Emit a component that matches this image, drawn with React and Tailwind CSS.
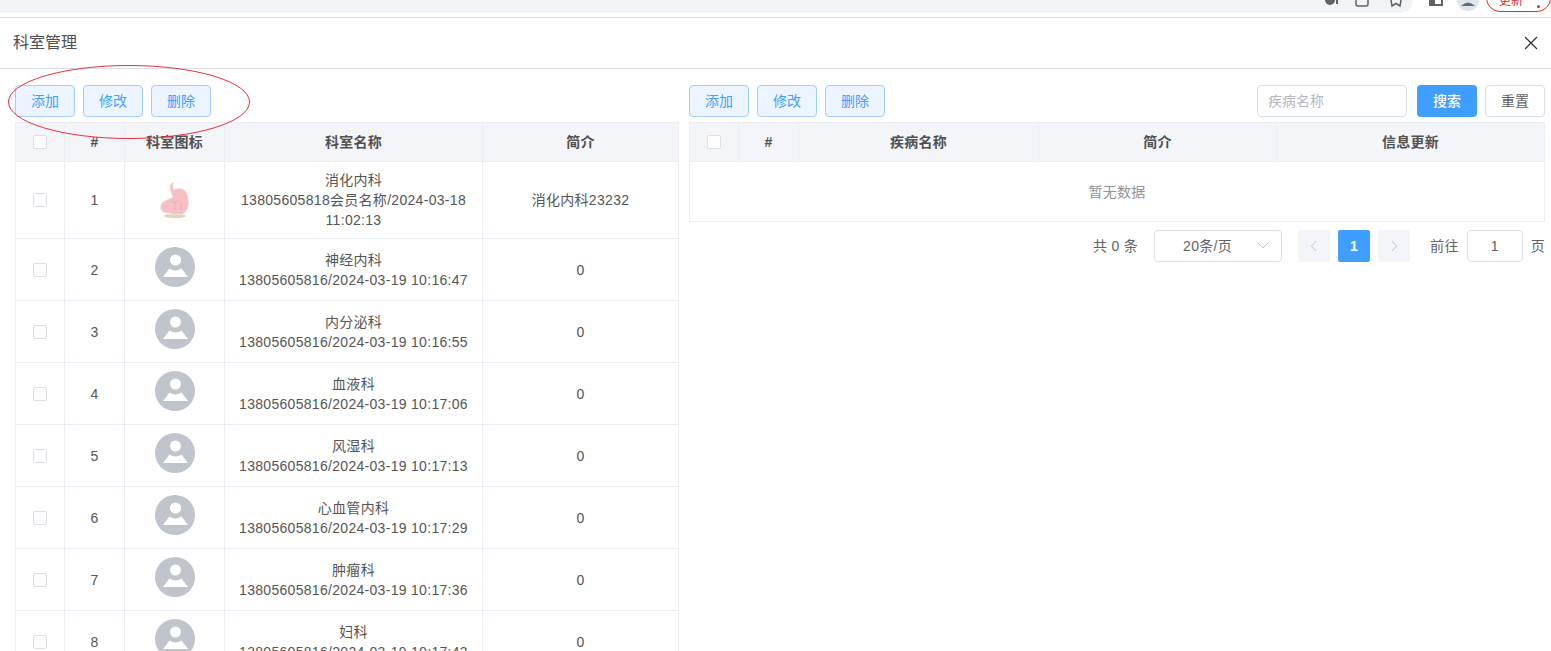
const font = { fontFamily: '"Liberation Sans", "Noto Sans CJK SC", sans-serif' }

const departments = [
  { id: 1, name: '消化内科', info: ['13805605818会员名称/2024-03-18', '11:02:13'], intro: '消化内科23232', stomach: true },
  { id: 2, name: '神经内科', info: ['13805605816/2024-03-19 10:16:47'], intro: '0' },
  { id: 3, name: '内分泌科', info: ['13805605816/2024-03-19 10:16:55'], intro: '0' },
  { id: 4, name: '血液科', info: ['13805605816/2024-03-19 10:17:06'], intro: '0' },
  { id: 5, name: '风湿科', info: ['13805605816/2024-03-19 10:17:13'], intro: '0' },
  { id: 6, name: '心血管内科', info: ['13805605816/2024-03-19 10:17:29'], intro: '0' },
  { id: 7, name: '肿瘤科', info: ['13805605816/2024-03-19 10:17:36'], intro: '0' },
  { id: 8, name: '妇科', info: ['13805605816/2024-03-19 10:17:43'], intro: '0' },
]

function Checkbox() {
  return <span className="block h-[14px] w-[14px] rounded-[2px] border border-[#dcdfe6] bg-white" />
}

function PlainButton({ children }) {
  return (
    <button
      type="button"
      className="h-8 w-[60px] rounded border border-[#a0cfff] bg-[#ecf5ff] text-sm text-[#409eff]"
    >
      {children}
    </button>
  )
}

function ActionButtons() {
  return (
    <div className="flex gap-2">
      <PlainButton>添加</PlainButton>
      <PlainButton>修改</PlainButton>
      <PlainButton>删除</PlainButton>
    </div>
  )
}

function Avatar() {
  return (
    <svg className="mb-[6px]" width="40" height="40" viewBox="0 0 40 40">
      <circle cx="20" cy="20" r="20" fill="#c0c4cc" />
      <circle cx="20.5" cy="13" r="5.5" fill="#fff" />
      <path d="M8 30 L14.5 21.5 Q20.5 25.5 26.5 21.5 L33 30 Z" fill="#fff" />
    </svg>
  )
}

function Stomach() {
  return (
    <svg width="30" height="37" viewBox="0 0 30 37">
      <ellipse cx="15" cy="34" rx="11" ry="2" fill="#dfd5bb" />
      <path
        d="M12.7 0.5 C10.5 1.5 9.5 4 10 6 C10.5 10 12.5 13 12.7 15 C10 17 6 18 3 20 C0.5 22 0 26 1.5 28.5 C4 31 7 31 9 31 C12 32.5 15 33 18 32 C20 33 22.5 33 24 31.5 C27 29 28.5 25 28.5 21 C28.5 17 28 13 25.5 9.5 C23 6.5 19 5.5 14 7.5 C12.5 6 12.5 3 13.5 1 Z"
        fill="#f6c0c4"
        stroke="#f8e4e4"
        strokeWidth="0.8"
      />
      <path d="M11 19 C14 21 17 20 20 17.5 M15 20 L14.5 29 M21 20 L20.5 28" stroke="#eaaab2" strokeWidth="0.8" fill="none" />
    </svg>
  )
}

function Th({ className = '', children }) {
  return (
    <th className={`border-r border-b border-[#ebeef5] bg-[#f4f5f9] p-0 text-sm font-bold tracking-[0.3px] text-[#505050] ${className}`}>
      {children}
    </th>
  )
}

function Td({ className = 'text-[#555555]', colSpan, children }) {
  return (
    <td
      colSpan={colSpan}
      className={`border-r border-b border-[#ebeef5] p-0 text-center align-middle text-sm leading-[20px] tracking-[0.3px] ${className}`}
    >
      {children}
    </td>
  )
}

function CheckHead() {
  return (
    <Th>
      <div className="flex justify-center">
        <Checkbox />
      </div>
    </Th>
  )
}

function DepartmentTable() {
  return (
    <table className="w-[664px] table-fixed border-separate border-spacing-0 border-t border-l border-[#ebeef5]">
      <colgroup>
        <col className="w-[49px]" />
        <col className="w-[60px]" />
        <col className="w-[100px]" />
        <col className="w-[258px]" />
        <col className="w-[196px]" />
      </colgroup>
      <thead>
        <tr className="h-[39px]">
          <CheckHead />
          <Th>#</Th>
          <Th>科室图标</Th>
          <Th>科室名称</Th>
          <Th>简介</Th>
        </tr>
      </thead>
      <tbody>
        {departments.map((d) => (
          <tr key={d.id} className={d.stomach ? 'h-[77px]' : 'h-[62px]'}>
            <Td>
              <div className="flex justify-center">
                <Checkbox />
              </div>
            </Td>
            <Td>{d.id}</Td>
            <Td>
              <div className="flex justify-center">{d.stomach ? <Stomach /> : <Avatar />}</div>
            </Td>
            <Td>
              <div>{d.name}</div>
              {d.info.map((line) => (
                <div key={line}>{line}</div>
              ))}
            </Td>
            <Td>{d.intro}</Td>
          </tr>
        ))}
      </tbody>
    </table>
  )
}

function DiseaseTable() {
  return (
    <table className="w-[856px] table-fixed border-separate border-spacing-0 border-t border-l border-[#ebeef5]">
      <colgroup>
        <col className="w-[49px]" />
        <col className="w-[60px]" />
        <col className="w-[240px]" />
        <col className="w-[238px]" />
        <col className="w-[268px]" />
      </colgroup>
      <thead>
        <tr className="h-[39px]">
          <CheckHead />
          <Th>#</Th>
          <Th>疾病名称</Th>
          <Th>简介</Th>
          <Th>信息更新</Th>
        </tr>
      </thead>
      <tbody>
        <tr className="h-[60px]">
          <Td className="text-[#909399]" colSpan={5}>
            暂无数据
          </Td>
        </tr>
      </tbody>
    </table>
  )
}

function Pagination() {
  return (
    <div className="mt-2 flex h-8 items-center justify-end text-sm tracking-[0.3px] text-[#606266]">
      <span>共 0 条</span>
      <div className="relative ml-4 flex h-8 w-[128px] items-center rounded border border-[#dcdfe6] pl-7">
        20条/页
        <svg className="absolute right-3 top-[11px]" width="12" height="8" viewBox="0 0 12 8" fill="none" stroke="#c0c4cc">
          <path d="M1 1 L6 6 L11 1" />
        </svg>
      </div>
      <div className="ml-4 flex h-8 w-8 items-center justify-center rounded-[2px] bg-[#f4f5f9]">
        <svg width="8" height="12" viewBox="0 0 8 12" fill="none" stroke="#c0c4cc"><path d="M6 1 L1.5 6 L6 11" /></svg>
      </div>
      <div className="ml-2 flex h-8 w-8 items-center justify-center rounded-[2px] bg-[#409eff] font-bold text-white">1</div>
      <div className="ml-2 flex h-8 w-8 items-center justify-center rounded-[2px] bg-[#f4f5f9]">
        <svg width="8" height="12" viewBox="0 0 8 12" fill="none" stroke="#c0c4cc"><path d="M2 1 L6.5 6 L2 11" /></svg>
      </div>
      <span className="ml-5">前往</span>
      <div className="ml-2 flex h-8 w-14 items-center justify-center rounded border border-[#dcdfe6]">1</div>
      <span className="ml-2">页</span>
    </div>
  )
}

function BrowserBar() {
  return (
    <div className="flex h-[18px] items-start overflow-hidden border-b border-[#dadce0]">
      <div className="flex h-[13px] w-[1413px] shrink-0 items-start justify-end gap-[20px] rounded-br-[14px] bg-[#f1f3f4] pr-[10px]">
        <svg className="-mr-[6px]" width="16" height="13" viewBox="0 0 16 13" fill="#5f6368">
          <circle cx="5" cy="0" r="5" />
          <rect x="11" y="0" width="2" height="4" />
        </svg>
        <svg width="14" height="13" viewBox="0 0 14 13" fill="none" stroke="#5f6368" strokeWidth="1.5">
          <path d="M1 0 V4 Q1 6 3 6 H11 Q13 6 13 4 V0" />
        </svg>
        <svg width="14" height="13" viewBox="0 0 14 13" fill="none" stroke="#5f6368" strokeWidth="1.5">
          <path d="M2 0 L3 6 L7 3.5 L11 6 L12 0" />
        </svg>
      </div>
      <svg className="ml-4 shrink-0" width="14" height="7" viewBox="0 0 14 7" fill="#5f6368">
        <path d="M0 0 H14 V6 H0 Z M6 0 V4 H12 V0 Z" fillRule="evenodd" />
      </svg>
      <svg className="ml-[14px] shrink-0" width="22" height="11" viewBox="0 0 22 11">
        <circle cx="11" cy="0" r="11" fill="#dfe3ea" />
        <path d="M4 6 Q11 -1 18 6 Z" fill="#5d6b85" />
      </svg>
      <div className="-mt-4 ml-[7px] flex h-7 w-[65px] shrink-0 items-end justify-between rounded-[14px] border border-[#d93025] pb-[2px] pl-[12px] pr-[10px] text-xs leading-[16px] text-[#d93025]">
        更新
        <span className="mb-[1px] h-[3px] w-[3px] rounded-full bg-[#d93025]" />
      </div>
    </div>
  )
}

export default function App() {
  return (
    <div className="relative h-[651px] w-[1551px] overflow-hidden bg-white" style={font}>
      <BrowserBar />

      <header className="flex h-[51px] items-center justify-between border-b border-[#dcdfe6] px-[13px]">
        <span className="text-base text-[#505050]">科室管理</span>
        <svg width="14" height="14" viewBox="0 0 14 14" stroke="#303133" strokeWidth="1.2">
          <path d="M1 1 L13 13 M13 1 L1 13" />
        </svg>
      </header>

      <main className="flex gap-[10px] pl-[15px] pt-4">
        <section className="w-[664px] shrink-0">
          <div className="mb-[5px]">
            <ActionButtons />
          </div>
          <DepartmentTable />
        </section>

        <section className="w-[856px] shrink-0">
          <div className="mb-[5px] flex items-center justify-between">
            <ActionButtons />
            <div className="flex">
              <div className="flex h-8 w-[150px] items-center rounded border border-[#dcdfe6] pl-[10px] text-sm text-[#b4b7bf]">
                疾病名称
              </div>
              <button type="button" className="ml-[10px] h-8 w-[60px] rounded bg-[#409eff] text-sm font-medium text-white">
                搜索
              </button>
              <button type="button" className="ml-2 h-8 w-[60px] rounded border border-[#dcdfe6] bg-white text-sm text-[#606266]">
                重置
              </button>
            </div>
          </div>
          <DiseaseTable />
          <Pagination />
        </section>
      </main>

      {/* red annotation circled on the screenshot */}
      <svg className="pointer-events-none absolute left-[7px] top-[64px]" width="244" height="76" viewBox="0 0 244 76" fill="none">
        <ellipse cx="122" cy="38" rx="120.5" ry="36.5" stroke="#e8303f" />
      </svg>
    </div>
  )
}
